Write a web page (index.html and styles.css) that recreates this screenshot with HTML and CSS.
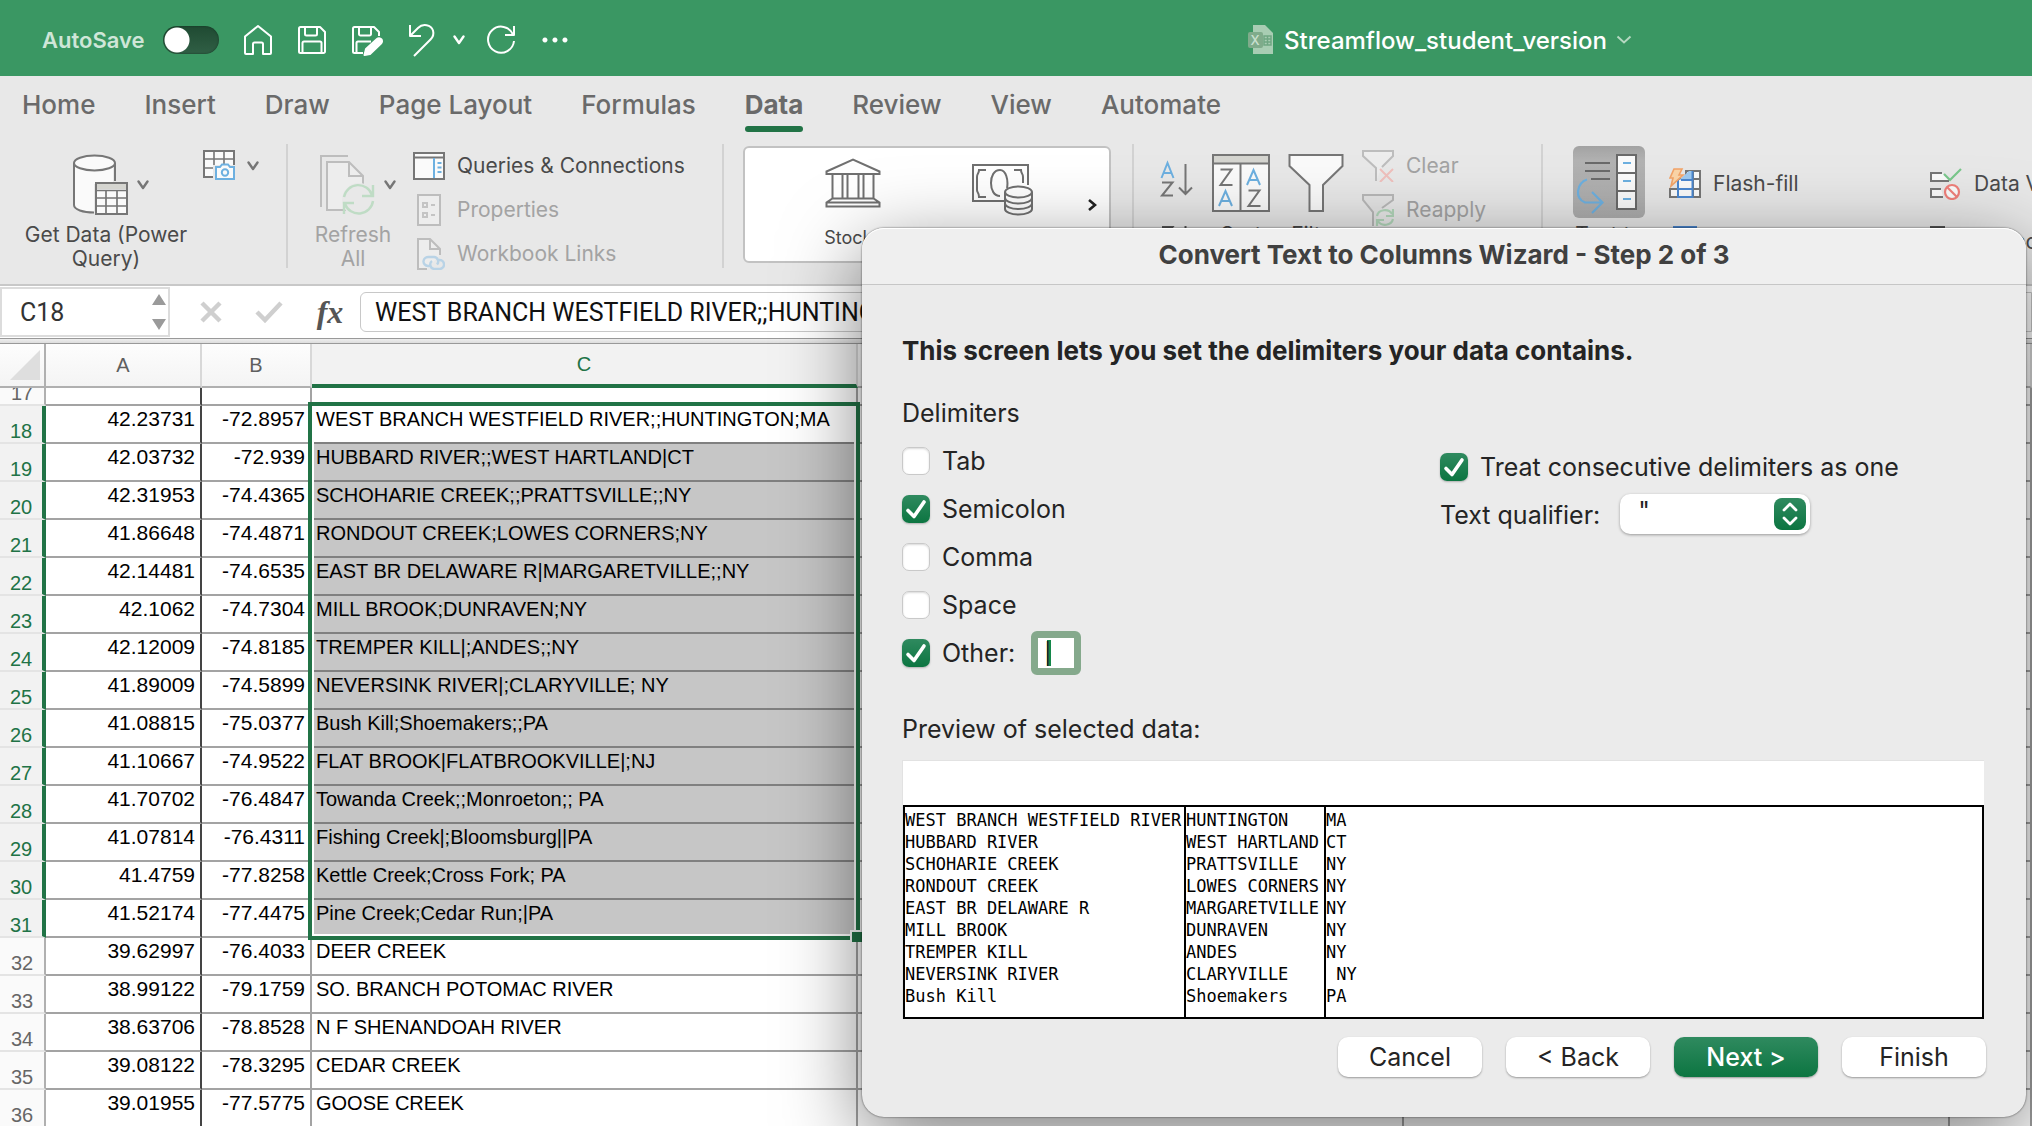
FILE: index.html
```html
<!DOCTYPE html>
<html lang="en">
<head>
<meta charset="utf-8">
<meta name="viewport" content="width=device-width, initial-scale=1">
<title>Streamflow_student_version</title>
<link rel="stylesheet" href="styles.css">
</head>
<body>
<svg class="defs" aria-hidden="true">
  <symbol id="chev" viewBox="0 0 12 10"><path d="M1.500 1.500 6 8l4.500-6.500" fill="none" stroke="currentColor" stroke-width="2.400" stroke-linecap="round" stroke-linejoin="round"/></symbol>
</svg>

<header class="titlebar">
  <label class="autosave">AutoSave <input type="checkbox" class="switch"></label>
  <div class="quick">
    <button type="button" aria-label="Home"><svg width="30" height="32" viewBox="0 0 30 32"><path d="M2 12.500 15 2l13 10.500V29a1 1 0 0 1-1 1h-7V20a1.500 1.500 0 0 0-1.500-1.500h-7A1.500 1.500 0 0 0 10 20v10H3a1 1 0 0 1-1-1z"/></svg></button>
    <button type="button" aria-label="Save"><svg width="30" height="32" viewBox="0 0 30 32"><path d="M3.500 3H23l5 5v19.500a1.500 1.500 0 0 1-1.500 1.500h-23A1.500 1.500 0 0 1 2 27.500v-23A1.500 1.500 0 0 1 3.500 3zM8 3v7a1.500 1.500 0 0 0 1.500 1.500h9A1.500 1.500 0 0 0 20 10V3M5.500 29V19A1.500 1.500 0 0 1 7 17.500h16a1.500 1.500 0 0 1 1.500 1.500v10"/></svg></button>
    <button type="button" aria-label="Save with edits"><svg width="32" height="34" viewBox="0 0 32 34"><path d="M12 30H3.500A1.500 1.500 0 0 1 2 28.500v-23A1.500 1.500 0 0 1 3.500 4H23l5 5v4M8 4v7a1.500 1.500 0 0 0 1.500 1.500h9A1.500 1.500 0 0 0 20 11V4M5.500 30V20A1.500 1.500 0 0 1 7 18.500h13"/><path class="solid" d="m13.500 32 1.500-6 11-10a3 3 0 0 1 4 4.500L19 31z"/></svg></button>
    <button type="button" aria-label="Undo"><svg width="30" height="34" viewBox="0 0 30 34"><path d="M3 2v11h11M3 13l8-8c5-5 13-3 15 2.500 1 3.500 0 6.500-2.500 9L7 33"/></svg></button>
    <button type="button" aria-label="Undo history" class="tight"><svg width="12" height="10"><use href="#chev"/></svg></button>
    <button type="button" aria-label="Redo"><svg width="32" height="32" viewBox="0 0 32 32"><path d="M29 2v9h-9M28 10.500A13 13 0 1 0 29 17"/></svg></button>
    <button type="button" aria-label="More"><svg width="28" height="8" viewBox="0 0 28 8"><path class="solid" d="M4 1.500h0a2.500 2.500 0 1 1-.1 0zM14 1.500h0a2.500 2.500 0 1 1-.1 0zM24 1.500h0a2.500 2.500 0 1 1-.1 0z" stroke="none"/></svg></button>
  </div>
  <button type="button" class="docname">
    <svg width="28" height="30" viewBox="0 0 28 30"><path d="M6 0h12l8 8v21H6z" fill="#a8cdb3"/><path d="M17 11h7v9h-7zM20.500 11v9M17 14h7M17 17h7" stroke="#6fa683" stroke-width="1.500" fill="none"/><rect x="1" y="7" width="15" height="16" rx="2" fill="#7fab8b"/><text x="8" y="20" text-anchor="middle" font-size="13" font-family="Inter, sans-serif" fill="#c9e0cf">X</text></svg>
    <span>Streamflow_student_version</span>
    <svg width="16" height="10" viewBox="0 0 16 10"><path d="m1.500 1.500 6.500 6 6.500-6" fill="none" stroke="#b5d8c1" stroke-width="2"/></svg>
  </button>
</header>

<nav class="tabs">
  <a href="#">Home</a><a href="#">Insert</a><a href="#">Draw</a><a href="#">Page Layout</a><a href="#">Formulas</a><a href="#" class="current">Data</a><a href="#">Review</a><a href="#">View</a><a href="#">Automate</a>
</nav>

<section class="ribbon" aria-label="Data tools">
  <div class="group g-get">
    <button type="button" class="big wide">
      <span class="pic"><svg width="56" height="62" viewBox="0 0 56 62"><path d="M2 9v42c0 5 9 8 20 8V30h19V9" fill="#fafafa"/><path d="M22 58.500C11 58.500 2 55.500 2 51V9m41 0v18" fill="none" stroke="#767676" stroke-width="2"/><ellipse cx="22.500" cy="9" rx="20.500" ry="7.500" fill="#fafafa" stroke="#767676" stroke-width="2"/><path d="M24 29h31v31H24z" fill="#fafafa" stroke="#767676" stroke-width="2"/><path d="M25 30h29v5H25z" fill="#d5d5d0"/><path d="M24 36.500h31M24 44h31M24 52h31M34 36v24M45 36v24" stroke="#767676" stroke-width="1.700"/></svg><svg class="c" width="12" height="10"><use href="#chev"/></svg></span>
      <span>Get Data (Power Query)</span>
    </button>
    <button type="button" class="flat" aria-label="Data from picture">
      <svg width="32" height="32" viewBox="0 0 32 32"><path d="M1 1h30v26H1z" fill="#fafafa" stroke="#767676" stroke-width="2"/><path d="M1 9h30M1 18h30M11 1v26M21 1v16" stroke="#767676" stroke-width="1.600"/><path d="M10 15h22v17H10z" fill="#e8e8e8"/><path d="M13 17h4l2-2.500h6l2 2.500h4v12H13z" fill="#fafafa" stroke="#6db0e0" stroke-width="2"/><circle cx="22" cy="22.500" r="3.200" fill="none" stroke="#6db0e0" stroke-width="2"/></svg>
      <svg class="c" width="12" height="10"><use href="#chev"/></svg>
    </button>
  </div>
  <div class="rule"></div>
  <div class="group g-conn">
    <button type="button" class="big narrow" disabled>
      <span class="pic"><svg width="56" height="62" viewBox="0 0 56 62"><path d="M2 53V2h27" fill="none" stroke="#bdbdbd" stroke-width="2"/><path d="M8 8h22l14 14v34H8z" fill="#ededed" stroke="#bdbdbd" stroke-width="2"/><path d="M30 8v14h14" fill="none" stroke="#bdbdbd" stroke-width="2"/><circle cx="40" cy="46" r="17" fill="#e8e8e8"/><path d="M25 43a14.500 14.500 0 0 1 28-2M54 31v11H43M54 47a14.500 14.500 0 0 1-28 3M25 60V49h10" fill="none" stroke="#bfdcc5" stroke-width="2.400"/></svg><svg class="c" width="12" height="10"><use href="#chev"/></svg></span>
      <span>Refresh All</span>
    </button>
    <div class="stack">
      <button type="button"><svg width="32" height="32" viewBox="0 0 32 32"><path d="M1 3h30v26H1z" fill="#fafafa" stroke="#767676" stroke-width="2"/><path d="M1 7.500h30" stroke="#767676" stroke-width="2"/><path d="M21 8v20" stroke="#6db0e0" stroke-width="2"/><path d="M24.500 13h4M24.500 17.500h4M24.500 22h4" stroke="#6db0e0" stroke-width="2"/></svg>Queries &amp; Connections</button>
      <button type="button" disabled><svg width="32" height="32" viewBox="0 0 32 32"><path d="M5 1h22v30H5z" fill="#ededed" stroke="#bdbdbd" stroke-width="2"/><path d="M10 9h4v4h-4zM10 19h4v4h-4zM18 11h4M18 21h4" fill="none" stroke="#c4c4c4" stroke-width="2"/></svg>Properties</button>
      <button type="button" disabled><svg width="32" height="32" viewBox="0 0 32 32"><path d="M14 31H5V1h12l10 10v6" fill="#ededed" stroke="#bdbdbd" stroke-width="2"/><path d="M17 1v10h10" fill="none" stroke="#bdbdbd" stroke-width="2"/><path d="M17 28h-2a5 4.500 0 1 1 1-9h5a4.500 4.500 0 0 1 3 7.500M26 22a4.500 4.500 0 0 1 1 9h-6a4.500 4.500 0 0 1-2-8" fill="none" stroke="#b9d3e6" stroke-width="2.400"/></svg>Workbook Links</button>
    </div>
  </div>
  <div class="rule"></div>
  <div class="group g-types">
    <div class="gallery">
      <button type="button"><svg width="56" height="50" viewBox="0 0 56 50"><path d="M1.500 16v-2.500L28 1.500l26.500 12V16zM1.500 48.500v-4l6-4h41l6 4v4zM7.500 16v24M17.500 16v24M22.500 16v24M33.500 16v24M38.500 16v24M48.500 16v24M1.500 44.500h53" fill="none" stroke="#707070" stroke-width="2"/></svg><span>Stocks</span></button>
      <button type="button" aria-label="Currencies"><svg width="62" height="52" viewBox="0 0 62 52"><path d="M32 37H1V1h55v20" fill="none" stroke="#707070" stroke-width="2"/><path d="M14 6H7c0 4-2 3-2 7v13c0 3 2 2 2 7h7M42 6h7c0 4 2 3 2 7v6M35 24c1.500-8-1-18-7-18s-9 6-9 13 3 13 9 13" fill="none" stroke="#707070" stroke-width="2"/><path d="M33 28v17c0 3 6 5.500 13.500 5.500S60 48 60 45V28" fill="#fff" stroke="#707070" stroke-width="2"/><ellipse cx="46.500" cy="28" rx="13.500" ry="5.500" fill="#fff" stroke="#707070" stroke-width="2"/><path d="M33 34c0 3 6 5.500 13.500 5.500S60 37 60 34M33 39.500c0 3 6 5.500 13.500 5.500S60 42.500 60 39.500" fill="none" stroke="#707070" stroke-width="2"/></svg></button>
      <button type="button" class="more" aria-label="More data types"><svg width="10" height="14" viewBox="0 0 10 14"><path d="m2 2 6 5-6 5" fill="none" stroke="#222" stroke-width="2.600"/></svg></button>
    </div>
  </div>
  <div class="rule"></div>
  <div class="group g-sort">
    <div class="az">
      <button type="button" aria-label="Sort ascending"><svg width="36" height="40" viewBox="0 0 36 40"><path d="m3.500 18 6-15 6 15M5.500 13h8" fill="none" stroke="#6db0e0" stroke-width="2"/><path d="M4 22.500h10.500L4 35.500h11" fill="none" stroke="#767676" stroke-width="2"/><path d="M27.500 4v30M21 27.500l6.500 6.500 6.500-6.500" fill="none" stroke="#767676" stroke-width="2"/></svg></button>
      <button type="button" aria-label="Sort descending"><svg width="36" height="40" viewBox="0 0 36 40"><path d="M4 3h10.500L4 16h11M27.500 2v30M21 25.500l6.500 6.500 6.500-6.500" fill="none" stroke="#555" stroke-width="2"/><path d="m3.500 36 6-15 6 15M5.500 31h8" fill="none" stroke="#6db0e0" stroke-width="2"/></svg></button>
    </div>
    <button type="button" class="big"><span class="pic"><svg width="58" height="62" viewBox="0 0 58 62"><path d="M1 1h56v56H1z" fill="#fafafa" stroke="#767676" stroke-width="2"/><path d="M2 2h54v7H2z" fill="#d5d5d0"/><path d="M1 9.500h56M28.500 9v48M8.500 15.500h11L8.500 31h12M36.500 36.500h11L36.500 52h12" fill="none" stroke="#767676" stroke-width="2"/><path d="m7 52 6.500-15L20 52M9.500 47h8M35 31l6.500-15L48 31M37.500 26h8" fill="none" stroke="#6db0e0" stroke-width="2"/></svg></span><span>Sort</span></button>
    <button type="button" class="big"><span class="pic"><svg width="56" height="62" viewBox="0 0 56 62"><path d="M1.500 1h53v11L35 31v26H21.500V31L1.500 12z" fill="#fafafa" stroke="#767676" stroke-width="2"/></svg></span><span>Filter</span></button>
    <div class="stack">
      <button type="button" disabled><svg width="32" height="32" viewBox="0 0 32 32"><path d="M14 31V18L1 6V1h30v5L20 17" fill="#ededed" stroke="#bdbdbd" stroke-width="2"/><path d="m18 19 13 13M31 19 18 32" stroke="#efc0bd" stroke-width="2"/></svg>Clear</button>
      <button type="button" disabled><svg width="32" height="32" viewBox="0 0 32 32"><path d="M11 32V18L1 6V1h30v5L20 14" fill="#e4e4e4" stroke="#b8b8b8" stroke-width="2"/><path d="M15 22a8 7 0 0 1 15-2M31 15v7h-7M31 25a8 7 0 0 1-15 2M15 33v-7h7" fill="none" stroke="#b2d6ba" stroke-width="2.200"/></svg>Reapply</button>
    </div>
  </div>
  <div class="rule"></div>
  <div class="group g-tools">
    <button type="button" class="big pressed"><span class="pic"><svg width="72" height="72" viewBox="0 0 72 72"><path d="M12 17h25M12 25h25M18 33h19" stroke="#6a6a6a" stroke-width="2"/><path d="M44 9h19v54H44z" fill="#fafafa" stroke="#6a6a6a" stroke-width="2"/><path d="M44 27h19M44 45h19" stroke="#6a6a6a" stroke-width="2"/><path d="M50 17h8M50 35h8M50 53h8" stroke="#6db0e0" stroke-width="2"/><path d="M14 33.500C4 37 1 52 12 56.500h17M19 46l10.500 10.500L19 67" fill="none" stroke="#6db0e0" stroke-width="2.200"/></svg></span><span>Text to</span></button>
    <div class="stack roomy fill">
      <button type="button"><svg width="32" height="32" viewBox="0 0 32 32"><path d="M1 21h8V11h8V3h14v26H1z" fill="#fafafa" stroke="#767676" stroke-width="2"/><path d="M1 21h30M9 11h22M24 3v26" stroke="#767676" stroke-width="2"/><path d="M10 12 20 3h3v9z" fill="#9fcaf0"/><path d="M9 11v18h14.500V3M9 21h14M12 12h11" fill="none" stroke="#4b87d0" stroke-width="2"/><path d="M5 1h8l-3 6h4L2 18l2-8H1z" fill="#fbd5a8" stroke="#f3a468" stroke-width="1.600"/></svg>Flash-fill</button>
      <button type="button" aria-label="Remove duplicates"><svg width="32" height="32" viewBox="0 0 32 32"><path d="M5 1h22v30H5z" fill="#9fcaf0" stroke="#4b87d0" stroke-width="2"/></svg></button>
    </div>
    <div class="stack roomy">
      <button type="button"><svg width="32" height="32" viewBox="0 0 32 32"><path d="M12 5H1v8h14l4 0M11 21H1v8h12" fill="#fafafa" stroke="#767676" stroke-width="2"/><path d="m14 6 6 6L31 1" fill="none" stroke="#79c78b" stroke-width="2.200"/><circle cx="22" cy="24" r="7" fill="#fafafa" stroke="#ef7f7a" stroke-width="2.200"/><path d="m17 19 10 10" stroke="#ef7f7a" stroke-width="2.200"/></svg>Data Validation</button>
      <button type="button"><svg width="32" height="32" viewBox="0 0 32 32"><path d="M1 1h13v12H1z" fill="#fafafa" stroke="#555" stroke-width="2"/></svg>Consolidate</button>
    </div>
  </div>
</section>

<section class="formula" aria-label="Formula bar">
  <div class="namebox">
    <input type="text" value="C18" aria-label="Name box">
    <svg width="14" height="36" viewBox="0 0 14 36"><path d="M7 0l7 11H0zM7 36l7-11H0z" fill="#9a9a9a"/></svg>
  </div>
  <button type="button" aria-label="Cancel entry"><svg width="22" height="22" viewBox="0 0 22 22"><path d="m2 2 18 18M20 2 2 20" stroke="#cfcfcf" stroke-width="4.500"/></svg></button>
  <button type="button" aria-label="Enter"><svg width="28" height="22" viewBox="0 0 28 22"><path d="m2 11 8 8L26 2" fill="none" stroke="#cfcfcf" stroke-width="4.500"/></svg></button>
  <button type="button" class="fx" aria-label="Insert function">fx</button>
  <input type="text" class="entry" aria-label="Formula" value="WEST BRANCH WESTFIELD RIVER;;HUNTINGTON;MA">
</section>

<main class="sheet">
  <table>
    <colgroup><col class="w-n"><col class="w-a"><col class="w-b"><col class="w-c"><col class="w-c"><col class="w-c"><col></colgroup>
    <thead><tr><th class="corner"><svg width="30" height="30" viewBox="0 0 30 30"><path d="M30 0v30H0z" fill="#dedede"/></svg></th><th>A</th><th>B</th><th class="on">C</th><th></th><th></th><th></th></tr></thead>
    <tbody>
      <tr class="cut"><th><span>17</span></th><td></td><td></td><td></td><td></td><td></td><td></td></tr>
      <tr class="sel first"><th><span>18</span></th><td>42.23731</td><td>-72.8957</td><td>WEST BRANCH WESTFIELD RIVER;;HUNTINGTON;MA</td><td></td><td></td><td></td></tr>
      <tr class="sel"><th><span>19</span></th><td>42.03732</td><td>-72.939</td><td>HUBBARD RIVER;;WEST HARTLAND|CT</td><td></td><td></td><td></td></tr>
      <tr class="sel"><th><span>20</span></th><td>42.31953</td><td>-74.4365</td><td>SCHOHARIE CREEK;;PRATTSVILLE;;NY</td><td></td><td></td><td></td></tr>
      <tr class="sel"><th><span>21</span></th><td>41.86648</td><td>-74.4871</td><td>RONDOUT CREEK;LOWES CORNERS;NY</td><td></td><td></td><td></td></tr>
      <tr class="sel"><th><span>22</span></th><td>42.14481</td><td>-74.6535</td><td>EAST BR DELAWARE R|MARGARETVILLE;;NY</td><td></td><td></td><td></td></tr>
      <tr class="sel"><th><span>23</span></th><td>42.1062</td><td>-74.7304</td><td>MILL BROOK;DUNRAVEN;NY</td><td></td><td></td><td></td></tr>
      <tr class="sel"><th><span>24</span></th><td>42.12009</td><td>-74.8185</td><td>TREMPER KILL|;ANDES;;NY</td><td></td><td></td><td></td></tr>
      <tr class="sel"><th><span>25</span></th><td>41.89009</td><td>-74.5899</td><td>NEVERSINK RIVER|;CLARYVILLE; NY</td><td></td><td></td><td></td></tr>
      <tr class="sel"><th><span>26</span></th><td>41.08815</td><td>-75.0377</td><td>Bush Kill;Shoemakers;;PA</td><td></td><td></td><td></td></tr>
      <tr class="sel"><th><span>27</span></th><td>41.10667</td><td>-74.9522</td><td>FLAT BROOK|FLATBROOKVILLE|;NJ</td><td></td><td></td><td></td></tr>
      <tr class="sel"><th><span>28</span></th><td>41.70702</td><td>-76.4847</td><td>Towanda Creek;;Monroeton;; PA</td><td></td><td></td><td></td></tr>
      <tr class="sel"><th><span>29</span></th><td>41.07814</td><td>-76.4311</td><td>Fishing Creek|;Bloomsburg||PA</td><td></td><td></td><td></td></tr>
      <tr class="sel"><th><span>30</span></th><td>41.4759</td><td>-77.8258</td><td>Kettle Creek;Cross Fork; PA</td><td></td><td></td><td></td></tr>
      <tr class="sel"><th><span>31</span></th><td>41.52174</td><td>-77.4475</td><td>Pine Creek;Cedar Run;|PA</td><td></td><td></td><td></td></tr>
      <tr><th><span>32</span></th><td>39.62997</td><td>-76.4033</td><td>DEER CREEK</td><td></td><td></td><td></td></tr>
      <tr><th><span>33</span></th><td>38.99122</td><td>-79.1759</td><td>SO. BRANCH POTOMAC RIVER</td><td></td><td></td><td></td></tr>
      <tr><th><span>34</span></th><td>38.63706</td><td>-78.8528</td><td>N F SHENANDOAH RIVER</td><td></td><td></td><td></td></tr>
      <tr><th><span>35</span></th><td>39.08122</td><td>-78.3295</td><td>CEDAR CREEK</td><td></td><td></td><td></td></tr>
      <tr><th><span>36</span></th><td>39.01955</td><td>-77.5775</td><td>GOOSE CREEK</td><td></td><td></td><td></td></tr>
    </tbody>
  </table>
  <div class="marquee"><i></i></div>
</main>

<div class="wizard" role="dialog" aria-labelledby="wiz-title">
  <h1 id="wiz-title">Convert Text to Columns Wizard - Step 2 of 3</h1>
  <form class="wizard-body">
    <h2>This screen lets you set the delimiters your data contains.</h2>
    <div class="options">
      <div class="delims" role="group" aria-labelledby="dl">
        <div class="line" id="dl">Delimiters</div>
        <label class="line"><input type="checkbox">Tab</label>
        <label class="line"><input type="checkbox" checked>Semicolon</label>
        <label class="line"><input type="checkbox">Comma</label>
        <label class="line"><input type="checkbox">Space</label>
        <div class="line"><input type="checkbox" id="other" checked><label for="other">Other:</label><input type="text" class="char" value="|" aria-label="Other delimiter"></div>
      </div>
      <div class="quals">
        <label class="line"><input type="checkbox" checked>Treat consecutive delimiters as one</label>
        <div class="line"><label for="qual">Text qualifier:</label><select id="qual"><option>"</option><option>'</option><option>{none}</option></select></div>
      </div>
    </div>
    <div class="line" id="pv">Preview of selected data:</div>
    <div class="preview">
      <table aria-labelledby="pv">
        <colgroup><col class="p1"><col class="p2"><col></colgroup>
        <tbody>
          <tr><td>WEST BRANCH WESTFIELD RIVER</td><td>HUNTINGTON</td><td>MA</td></tr>
          <tr><td>HUBBARD RIVER</td><td>WEST HARTLAND</td><td>CT</td></tr>
          <tr><td>SCHOHARIE CREEK</td><td>PRATTSVILLE</td><td>NY</td></tr>
          <tr><td>RONDOUT CREEK</td><td>LOWES CORNERS</td><td>NY</td></tr>
          <tr><td>EAST BR DELAWARE R</td><td>MARGARETVILLE</td><td>NY</td></tr>
          <tr><td>MILL BROOK</td><td>DUNRAVEN</td><td>NY</td></tr>
          <tr><td>TREMPER KILL</td><td>ANDES</td><td>NY</td></tr>
          <tr><td>NEVERSINK RIVER</td><td>CLARYVILLE</td><td> NY</td></tr>
          <tr><td>Bush Kill</td><td>Shoemakers</td><td>PA</td></tr>
        </tbody>
      </table>
    </div>
    <div class="actions">
      <button type="button">Cancel</button><button type="button">&lt; Back</button><button type="button" class="primary">Next &gt;</button><button type="button">Finish</button>
    </div>
  </form>
</div>
</body>
</html>
```
FILE: styles.css
```css
:root {
  --green: #217346;
  --ui: Inter, "Liberation Sans", sans-serif;
  --cell: "Liberation Sans", Arial, sans-serif;
}
* { box-sizing: border-box; }
body {
  position: relative;
  margin: 0;
  height: 100vh;
  overflow: hidden;
  display: flex;
  flex-direction: column;
  background: #fff;
  font-family: var(--ui);
}
.defs { display: none; }
svg { display: block; flex: none; }
button { border: 0; padding: 0; margin: 0; background: none; font: inherit; color: inherit; }

/* title bar */
.titlebar {
  flex: none;
  display: flex;
  align-items: center;
  height: 76px;
  padding: 4px 0 0 42px;
  background: #3a9763;
  color: #fff;
}
.autosave {
  display: flex;
  align-items: center;
  gap: 18px;
  font-size: 22px;
  font-weight: 600;
  color: #cfe6d8;
}
.switch {
  appearance: none;
  width: 56px;
  height: 28px;
  margin: 0;
  border-radius: 14px;
  background: radial-gradient(circle at 14px 14px, #fff 12px, transparent 13px), linear-gradient(#1f4a32, #305f45);
  box-shadow: inset 0 0 2px #12301f;
}
.quick { display: flex; align-items: center; gap: 24px; margin-left: 24px; }
.quick svg { fill: none; stroke: #fff; stroke-width: 2; stroke-linejoin: round; }
.quick .solid { fill: #fff; }
.quick .tight { margin: 0 -4px 0 -8px; }
.docname {
  display: flex;
  align-items: center;
  gap: 9px;
  margin: 0 400px 0 auto;
  font-size: 24px;
  font-weight: 500;
}

/* ribbon */
.tabs {
  flex: none;
  display: flex;
  gap: 49px;
  height: 60px;
  padding-left: 22px;
  background: #e8e8e8;
  font-size: 26px;
  font-weight: 500;
  line-height: 58px;
}
.tabs a { color: #6a6a6a; text-decoration: none; white-space: nowrap; }
.tabs .current { position: relative; font-weight: 700; }
.tabs .current::after {
  content: "";
  position: absolute;
  left: 0;
  right: 0;
  top: 50px;
  height: 6px;
  border-radius: 3px;
  background: var(--green);
}
.ribbon {
  flex: none;
  display: flex;
  height: 150px;
  overflow: hidden;
  background: #e8e8e8;
  border-bottom: 2px solid #c8c8c8;
  color: #4a4a4a;
  font-size: 21px;
  line-height: 24px;
}
.rule { flex: none; width: 2px; height: 124px; margin-top: 8px; background: #d2d2d2; }
.group { flex: none; display: flex; align-items: flex-start; padding-top: 14px; }
.g-get { width: 286px; padding-left: 19px; gap: 10px; }
.g-conn { width: 434px; padding-left: 15px; gap: 10px; }
.g-types { width: 408px; padding: 10px 0 0 19px; }
.g-sort { width: 407px; padding-left: 24px; gap: 18px; }
.g-tools { padding-left: 30px; gap: 24px; }
.c { color: #767676; }
.big { display: flex; flex-direction: column; align-items: center; gap: 7px; padding-top: 4px; }
.big.wide { width: 174px; }
.big.narrow { width: 100px; }
.big.narrow > span:last-child { width: 84px; }
.pic { display: flex; align-items: center; gap: 9px; }
.wide .pic, .narrow .pic { padding-left: 8px; }
.flat { display: flex; align-items: center; gap: 12px; }
button:disabled { color: #a3a3a3; }
.stack { display: flex; flex-direction: column; gap: 12px; }
.stack button { display: flex; align-items: center; gap: 12px; height: 32px; white-space: nowrap; }
.roomy { padding-top: 18px; gap: 26px; }
.fill { width: 237px; }
.gallery {
  display: flex;
  width: 368px;
  height: 117px;
  padding-left: 33px;
  border: 2px solid #c2c2c2;
  border-radius: 6px;
  background: #fff;
  font-size: 18px;
}
.gallery button { width: 150px; display: flex; flex-direction: column; align-items: center; padding-top: 10px; gap: 18px; }
.gallery button + button { padding-top: 16px; }
.gallery .more { width: 28px; justify-content: center; padding: 0; }
.az { display: flex; flex-direction: column; gap: 24px; padding-top: 10px; width: 36px; }
.pressed { padding: 0; margin-top: -4px; gap: 5px; }
.pressed .pic { border-radius: 6px; background: linear-gradient(#a2a2a2, #b2b2b2 20%, #adadad); }

/* formula bar */
.formula {
  flex: none;
  display: flex;
  align-items: center;
  height: 58px;
  padding-bottom: 6px;
  background: linear-gradient(#fff 52px, #999 52px, #999 53px, #eee 53px, #ddd 57px, #999 57px);
}
.namebox {
  display: flex;
  align-items: center;
  width: 170px;
  height: 50px;
  padding-right: 2px;
  margin-right: 30px;
  border: 2px solid #dcdcdc;
}
.formula input { min-width: 0; border: 0; outline: 0; font-family: Roboto, sans-serif; font-size: 25px; color: #111; background: none; }
.namebox input { flex: 1; padding: 0 0 0 18px; color: #333; }
.formula button + button { margin-left: 33px; }
.formula .fx { width: 30px; margin: 0 15px 0 32px; font: italic 700 32px "Liberation Serif", serif; color: #555; }
.formula .entry {
  flex: 1;
  height: 40px;
  padding: 0 0 0 14px;
  border: 1px solid #c8c8c8;
  border-radius: 6px 0 0 6px;
}

/* grid */
.sheet { position: relative; flex: none; }
.sheet table { width: 100%; table-layout: fixed; border-spacing: 0; font-family: var(--cell); }
.w-n { width: 46px; }
.w-a { width: 156px; }
.w-b { width: 110px; }
.w-c { width: 546px; }
.sheet th, .sheet td { padding: 0; border: solid #a3a3a3; border-width: 0 2px 2px 0; overflow: hidden; }
.sheet thead th {
  height: 44px;
  background: linear-gradient(#fdfdfd, #f4f4f4);
  border-color: #b0b0b0;
  border-right-color: #d8d8d8;
  font-size: 20px;
  font-weight: 400;
  color: #5f5f5f;
}
.sheet thead .on { background: #f2f2f2; color: var(--green); border-bottom: 4px solid var(--green); }
.sheet thead .corner { padding-left: 10px; border-right-color: #b0b0b0; }
.sheet tbody th { background: #fafafa; border-color: #b0b0b0; border-bottom-color: #e4e4e4; font-size: 20px; font-weight: 400; color: #666; }
.sheet tbody th span { display: flex; align-items: flex-end; justify-content: center; height: 36px; line-height: 22px; }
.sheet .cut th span { height: 16px; }
.sheet .sel th { background: #f2f2f2; color: var(--green); border-right: 4px solid var(--green); }
.sheet td { height: 38px; vertical-align: top; font-size: 20px; line-height: 26px; white-space: nowrap; color: #000; }
.sheet .cut td { height: 18px; }
.sheet td:nth-child(2), .sheet td:nth-child(3) { text-align: right; padding-right: 5px; font-size: 21px; }
.sheet td:nth-child(2) { border-right-color: #444; }
.sheet td:nth-child(4) { padding-left: 4px; }
.sheet .sel td:nth-child(4) { background: #c6c6c6; border-bottom-color: #808080; }
.sheet .first td:nth-child(4) { background: #fff; }
.marquee {
  position: absolute;
  left: 308px;
  top: 58px;
  width: 552px;
  height: 538px;
  border: 4px solid var(--green);
  box-shadow: inset 0 0 0 2px #fff;
}
.marquee i {
  position: absolute;
  right: -6px;
  bottom: -6px;
  width: 12px;
  height: 12px;
  border: solid #fff;
  border-width: 2px 0 0 2px;
  background: var(--green);
}

/* wizard */
.wizard {
  position: absolute;
  left: 862px;
  right: 6px;
  top: 228px;
  border-radius: 22px;
  background: #ebebeb;
  color: #242424;
  font-size: 25px;
  box-shadow: 0 0 2px rgba(0, 0, 0, .7), 0 22px 80px rgba(0, 0, 0, .5);
}
.wizard h1 {
  margin: 0;
  height: 57px;
  border-bottom: 1px solid #c6c6c6;
  border-radius: 22px 22px 0 0;
  background: #efefef;
  box-shadow: inset 0 1px 0 #fff;
  text-align: center;
  font-size: 26px;
  font-weight: 700;
  line-height: 54px;
  color: #404040;
}
.wizard-body { padding: 50px 40px 40px; }
.wizard h2 { margin: 0 0 22px; font-size: 26px; font-weight: 700; line-height: 32px; }
.line { display: flex; align-items: center; gap: 12px; height: 48px; white-space: nowrap; }
.options { display: grid; grid-template-columns: 538px 1fr; margin-bottom: 28px; }
.quals { padding-top: 54px; }
.wizard input[type="checkbox"] {
  appearance: none;
  flex: none;
  width: 28px;
  height: 28px;
  margin: 0;
  border: 1px solid #c9c9c9;
  border-radius: 7px;
  background: #fff;
  box-shadow: inset 0 1px 2px rgba(0, 0, 0, .15);
}
.wizard input[type="checkbox"]:checked {
  border: 0;
  background: url("data:image/svg+xml,%3Csvg xmlns='http://www.w3.org/2000/svg' viewBox='0 0 28 28'%3E%3Cpath d='M6 15.500 12 21.500 22 7' fill='none' stroke='white' stroke-width='3.600' stroke-linecap='round' stroke-linejoin='round'/%3E%3C/svg%3E"), linear-gradient(#2f8a5f, #0c7541);
  box-shadow: 0 1px 2px rgba(0, 0, 0, .25);
}
.wizard .char {
  width: 50px;
  height: 44px;
  margin-left: 4px;
  padding: 0 0 0 6px;
  border: 7px solid #85a98c;
  border-radius: 6px;
  outline: 0;
  background: linear-gradient(#14874a, #14874a) 9px 2px / 4px 26px no-repeat #fff;
  font: 21px var(--ui);
  color: #222;
}
.wizard select {
  appearance: none;
  width: 190px;
  height: 40px;
  margin: -2px 0 0 8px;
  padding: 0 40px 6px 18px;
  border: 0;
  border-radius: 10px;
  background: url("data:image/svg+xml,%3Csvg xmlns='http://www.w3.org/2000/svg' viewBox='0 0 32 32'%3E%3Cdefs%3E%3ClinearGradient id='g' x2='0' y2='1'%3E%3Cstop stop-color='%232f8a5f'/%3E%3Cstop offset='1' stop-color='%230c7541'/%3E%3C/linearGradient%3E%3C/defs%3E%3Crect width='32' height='32' rx='8' fill='url(%23g)'/%3E%3Cpath d='m10 12 6-6 6 6M10 20l6 6 6-6' fill='none' stroke='white' stroke-width='2.800' stroke-linecap='round' stroke-linejoin='round'/%3E%3C/svg%3E") right 4px center / 32px no-repeat #fff;
  box-shadow: 0 1px 3px rgba(0, 0, 0, .35);
  font: 25px var(--ui);
  color: #242424;
}
.preview { margin: 7px 2px 0 0; padding-top: 44px; border: 1px solid #e2e2e2; border-bottom: 0; border-right: 0; background: #fff; }
.preview table {
  width: 100%;
  table-layout: fixed;
  border: 2px solid #000;
  border-spacing: 0;
  font: 17px/22px "DejaVu Sans Mono", monospace;
  color: #000;
}
.p1 { width: 279px; }
.p2 { width: 140px; }
.preview td { padding: 0; height: 22px; white-space: pre; }
.preview tr:first-child td { padding-top: 2px; }
.preview tr:last-child td { padding-bottom: 10px; }
.preview td + td { border-left: 2px solid #000; }
.actions { display: flex; justify-content: flex-end; gap: 24px; margin-top: 18px; }
.actions button {
  width: 144px;
  height: 40px;
  border-radius: 10px;
  background: #fff;
  box-shadow: 0 1px 2px rgba(0, 0, 0, .35);
}
.actions .primary { background: linear-gradient(#2f8a5f, #0c7541); color: #fff; font-weight: 500; }
```
